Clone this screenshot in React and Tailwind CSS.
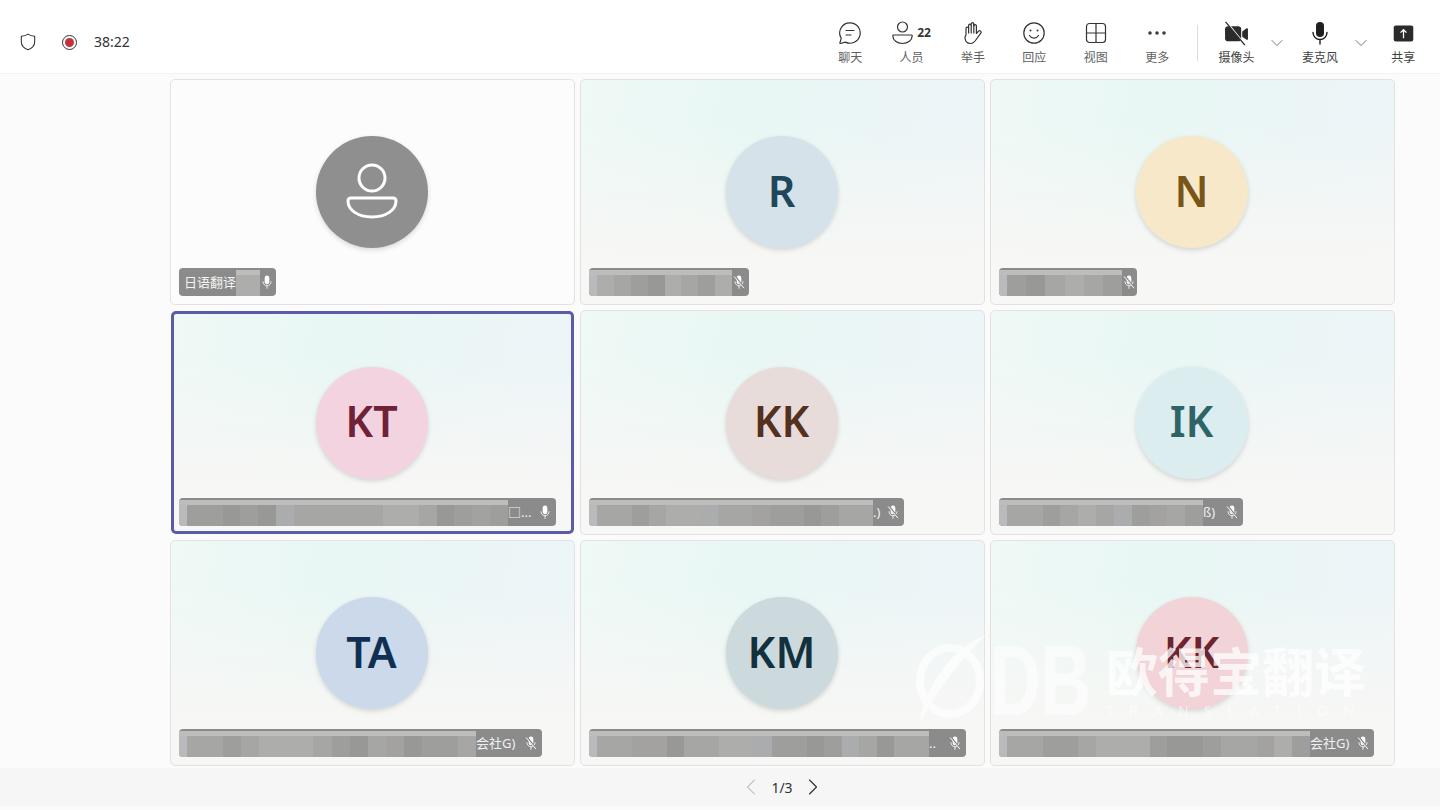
import { ChevronDown, ChevronLeft, ChevronRight, Ellipsis } from 'lucide-react'

const tones = ['bg-[#a6a6a4]', 'bg-[#9e9e9c]', 'bg-[#adadab]', 'bg-[#989897]', 'bg-[#a3a2a0]', 'bg-[#aaacae]']

const tiles = [
  { initials: null, label: '日语翻译', barWidth: 'w-[97px]', blur: 'w-[24px]', avatar: 'bg-[#8f8f8f]', ink: 'text-white', muted: false, plain: true, cells: '2' },
  { initials: 'R', barWidth: 'w-[160px]', blur: 'w-[143px]', avatar: 'bg-[#d6e2ea]', ink: 'text-[#1f475a]', muted: true, cells: '20132012' },
  { initials: 'N', barWidth: 'w-[138px]', blur: 'w-[123px]', avatar: 'bg-[#f6e8c9]', ink: 'text-[#7a5518]', muted: true, cells: '130201' },
  { initials: 'KT', barWidth: 'w-[377px]', blur: 'w-[329px]', avatar: 'bg-[#f4d3e0]', ink: 'text-[#6f2138]', muted: false, selected: true, tail: '□...', cells: '113135000002203141' },
  { initials: 'KK', barWidth: 'w-[315px]', blur: 'w-[284px]', avatar: 'bg-[#e8dcda]', ink: 'text-[#54301f]', muted: true, tail: '.)', cells: '0010225004113100' },
  { initials: 'IK', barWidth: 'w-[244px]', blur: 'w-[204px]', avatar: 'bg-[#dcedf0]', ink: 'text-[#2f6467]', muted: true, tail: 'ß)', cells: '00102051401' },
  { initials: 'TA', barWidth: 'w-[363px]', blur: 'w-[297px]', avatar: 'bg-[#cbd9ea]', ink: 'text-[#0f3052]', muted: true, tail: '会社G)', cells: '0010222013043110' },
  { initials: 'KM', barWidth: 'w-[377px]', blur: 'w-[340px]', avatar: 'bg-[#ccd9dd]', ink: 'text-[#12313c]', muted: true, tail: '..', cells: '0044300225113150300' },
  { initials: 'KK', barWidth: 'w-[375px]', blur: 'w-[311px]', avatar: 'bg-[#f2d3d8]', ink: 'text-[#6c2530]', muted: true, tail: '会社G)', cells: '00110222133100421' },
]

function ChatIcon() {
  return (
    <svg viewBox="0 0 24 24" className="h-6 w-6" fill="none" stroke="#333" strokeWidth="1.2">
      <path d="M12 1.8a10.2 10.2 0 1 1-4.6 19.3l-4.9 1.4c-.4.1-.7-.2-.6-.6l1.3-4.6A10.2 10.2 0 0 1 12 1.8Z" />
      <path d="M8 9.5h8M8 14h5" strokeLinecap="round" />
    </svg>
  )
}

function PeopleIcon() {
  return (
    <svg viewBox="0 0 22 24" className="h-6 w-[22px]" fill="none" stroke="#333" strokeWidth="1.2">
      <circle cx="10.5" cy="6" r="5" />
      <path d="M1.5 14h18c.4 0 .7.3.7.7 0 4.4-4.2 7.8-9.7 7.8S.8 19.1.8 14.7c0-.4.3-.7.7-.7Z" />
    </svg>
  )
}

function HandIcon() {
  return (
    <svg viewBox="3 0 19 25" className="h-[25px] w-[19px]" fill="none" stroke="#333" strokeWidth="1.2" strokeLinejoin="round">
      <path d="M6 14V7.5a1.3 1.3 0 0 1 2.6 0v-3a1.3 1.3 0 0 1 2.6 0V3a1.3 1.3 0 0 1 2.6 0v2a1.3 1.3 0 0 1 2.6 0v7.5l2.2-2.4a1.5 1.5 0 0 1 2.2 2l-4.6 6.4c-1.3 2-3 4-5.6 4-3.5 0-5.6-2.6-5.6-6.5Z" />
      <path d="M8.6 7.5V12M11.2 4.5V12M13.8 3V12" strokeLinecap="round" />
    </svg>
  )
}

function SmileIcon() {
  return (
    <svg viewBox="0 0 24 24" className="h-6 w-6" fill="none" stroke="#333" strokeWidth="1.2">
      <circle cx="12" cy="12" r="10.2" />
      <circle cx="8.5" cy="9.5" r="1" fill="#333" stroke="none" />
      <circle cx="15.5" cy="9.5" r="1" fill="#333" stroke="none" />
      <path d="M7.5 14.5c1 1.7 2.7 2.6 4.5 2.6s3.500-.9 4.500-2.600" strokeLinecap="round" />
    </svg>
  )
}

function ViewIcon() {
  return (
    <svg viewBox="0 0 24 24" className="h-6 w-6" fill="none" stroke="#333" strokeWidth="1.2">
      <rect x="2.5" y="2.5" width="19" height="19" rx="3" />
      <path d="M12 2.5v19M2.5 12h19" />
    </svg>
  )
}

function CameraOffIcon() {
  return (
    <svg viewBox="0 0 24 24" className="h-[25px] w-[25px]">
      <rect x="1" y="5" width="15.5" height="14.5" rx="3" fill="#2b2b2b" />
      <path d="M17.5 10l4.2-3c.6-.4 1.3 0 1.3.7v9.6c0 .7-.7 1.1-1.3.7l-4.2-3Z" fill="#2b2b2b" />
      <path d="M2.8 1.3l17 21" stroke="#fff" strokeWidth="1.5" />
      <path d="M1.5 0.8l18.5 22.4" stroke="#2b2b2b" strokeWidth="1.3" />
    </svg>
  )
}

function MicIcon({ size = 'h-6 w-6', color = '#1f1f1f', off = false }) {
  return (
    <svg viewBox="0 0 24 24" className={size} fill="none">
      <rect x="8" y="1" width="8" height="15" rx="4" fill={color} />
      <path d="M5 11.5a7 7 0 0 0 14 0M12 18.5V23" stroke={color} strokeWidth="1.4" strokeLinecap="round" />
      {off && <path d="M4.5 1.5l16 20" stroke="#8e8e8e" strokeWidth="3.5" />}
      {off && <path d="M3.5 2.5l17 20" stroke={color} strokeWidth="1.6" />}
    </svg>
  )
}

function ShareIcon() {
  return (
    <svg viewBox="0 0 24 20" className="h-[17px] w-[23px]">
      <rect x="0.5" y="0.5" width="23" height="19" rx="2.5" fill="#2b2b2b" />
      <path d="M12 15.5V5.5M8.5 9l3.5-3.5L15.5 9" stroke="#fff" strokeWidth="1.5" fill="none" />
    </svg>
  )
}

function ToolButton({ label, strong, children }) {
  return (
    <div className="flex w-[61.4px] flex-col items-center">
      <div className="flex h-[28px] items-center justify-center">{children}</div>
      <span className={`mt-[2px] text-[12px] leading-[18px] ${strong ? 'text-[#424242]' : 'text-[#616161]'}`}>{label}</span>
    </div>
  )
}

function Chevron() {
  return (
    <div className="flex h-[44px] w-[20px] items-center justify-center pt-[4px]">
      <ChevronDown size={24} strokeWidth={0.8} color="#333" />
    </div>
  )
}

function Header() {
  return (
    <header className="flex h-[74px] shrink-0 items-start justify-between border-b border-[#f3f3f3] bg-white pr-[6px] pl-[20px]">
      <div className="flex items-center pt-[33px] text-[#333]">
        <svg viewBox="0 0 18 20" className="h-[18px] w-4" fill="none" stroke="#333" strokeWidth="1.2">
          <path d="M9 1.2c2 1.5 4.5 2.3 7.5 2.4v6.4c0 4-2.5 6.8-7.5 8.8-5-2-7.5-4.800-7.500-8.800V3.600c3-.1 5.500-.9 7.500-2.400Z" />
        </svg>
        <span className="ml-[26px] flex h-[15px] w-[15px] items-center justify-center rounded-full border border-[#333]">
          <span className="h-[9px] w-[9px] rounded-full bg-[#c4313b]" />
        </span>
        <span className="ml-[17px] text-[14px] leading-[18px]">38:22</span>
      </div>
      <div className="flex items-start pt-[19px]">
        <ToolButton label="聊天"><ChatIcon /></ToolButton>
        <ToolButton label="人员">
          <div className="flex items-center gap-[3px]">
            <PeopleIcon />
            <span className="text-[12px] font-bold text-[#333]">22</span>
          </div>
        </ToolButton>
        <ToolButton label="举手"><HandIcon /></ToolButton>
        <ToolButton label="回应"><SmileIcon /></ToolButton>
        <ToolButton label="视图"><ViewIcon /></ToolButton>
        <ToolButton label="更多"><Ellipsis size={24} strokeWidth={1.5} color="#333" /></ToolButton>
        <div className="mt-[6px] ml-[9px] h-[36px] w-px bg-[#dcdcdc]" />
        <div className="ml-[8px]"><ToolButton label="摄像头" strong><CameraOffIcon /></ToolButton></div>
        <Chevron />
        <div className="ml-[2px]"><ToolButton label="麦克风" strong><MicIcon /></ToolButton></div>
        <Chevron />
        <div className="ml-[2px]"><ToolButton label="共享" strong><ShareIcon /></ToolButton></div>
      </div>
    </header>
  )
}

function Mosaic({ width, cells, plain }) {
  return (
    <div className={`flex h-full shrink-0 flex-col pt-[2px] ${width}`}>
      <div className="h-[5px] shrink-0 bg-[#bdbdbb]" />
      <div className="flex min-h-0 flex-1 blur-[0.6px]">
        {!plain && <div className="w-[8px] shrink-0 bg-[#bababc]" />}
        {cells.split('').map((c, i) => (
          <div key={i} className={`flex-1 ${tones[Number(c)]}`} />
        ))}
      </div>
    </div>
  )
}

function NameBar({ tile }) {
  const place = tile.selected ? 'bottom-[5px] left-[5px]' : 'bottom-[8px] left-[8px]'
  return (
    <div className={`absolute flex h-[28px] items-center overflow-hidden rounded-[4px] bg-[#8b8b8b] text-[13px] text-white ${place} ${tile.barWidth}`}>
      {tile.label && <span className="mt-[1px] shrink-0 pl-[5px] whitespace-nowrap text-[#f4f4f4]">{tile.label}</span>}
      <Mosaic width={tile.blur} cells={tile.cells} plain={tile.plain} />
      {tile.tail && <span className="mt-[1px] whitespace-nowrap text-[#f0f0f0]">{tile.tail}</span>}
      <div className="mr-[4px] ml-auto">
        <MicIcon size="h-[14px] w-[14px]" color="#ffffff" off={tile.muted} />
      </div>
    </div>
  )
}

function Tile({ tile, index }) {
  const bg = index === 0
    ? 'bg-[#fcfcfc]'
    : 'bg-[linear-gradient(180deg,rgba(247,247,245,0)_20%,#f7f7f5_80%),linear-gradient(100deg,#eff9f6_0%,#e8f7f4_40%,#ebf5f6_70%,#edf5f8_100%)]'
  const frame = tile.selected
    ? 'm-px border-[3px] border-[#5a5ca8]'
    : 'border border-[#e2e2e0]'
  return (
    <div className={`relative flex items-center justify-center rounded-[5px] pr-[2px] ${bg} ${frame}`}>
      <div className={`flex h-[112px] w-[112px] items-center justify-center rounded-full shadow-[0_2px_5px_rgba(0,0,0,0.14)] ${tile.avatar}`}>
        {tile.initials ? (
          <span className={`-mt-[2px] text-[43px] font-[560] ${tile.ink}`}>{tile.initials}</span>
        ) : (
          <svg viewBox="0 0 56 60" className="h-[60px] w-[56px]" fill="none" stroke="#fff" strokeWidth="3">
            <circle cx="28" cy="16" r="13" />
            <path d="M7 36h42c2 0 3 1 3 3 0 9-10 16-24 16S4 48 4 39c0-2 1-3 3-3Z" />
          </svg>
        )}
      </div>
      <NameBar tile={tile} />
    </div>
  )
}

// watermark lies over the tiles
function Watermark() {
  return (
    <div className="pointer-events-none absolute top-[632px] left-[915px] flex items-start text-white">
      <svg viewBox="0 0 75 96" className="h-[96px] w-[75px] opacity-70" fill="#fff" stroke="none">
        <ellipse cx="35" cy="49" rx="30" ry="33" fill="none" stroke="#fff" strokeWidth="8" />
        <path d="M5 92C8 60 34 16 71 3 47 26 20 60 5 92Z" />
      </svg>
      <span className="inline-block w-[104px] origin-left scale-x-[0.7] text-[100px] leading-[96px] font-bold whitespace-nowrap text-white opacity-60 [font-family:'Liberation_Sans',sans-serif]">DB</span>
      <div className="ml-[12px] pt-[14px]">
        <div className="text-[52px] leading-[52px] font-bold opacity-75">欧得宝翻译</div>
        <div className="mt-[5px] text-[14px] leading-[16px] tracking-[15.5px] whitespace-nowrap opacity-55">TRANSLATION</div>
      </div>
    </div>
  )
}

export default function App() {
  return (
    <div className="relative flex h-[810px] w-[1440px] flex-col overflow-hidden bg-[#fbfbfb] [font-family:'Noto_Sans','Noto_Sans_CJK_SC',sans-serif]">
      <Header />
      <main className="flex-1 pt-[5px] pl-[170px]">
        <div className="grid w-[1225px] grid-cols-3 grid-rows-[226px_225px_226px] gap-[5px]">
          {tiles.map((tile, i) => (
            <Tile key={i} tile={tile} index={i} />
          ))}
        </div>
      </main>
      <footer className="mb-[4px] flex h-[38px] shrink-0 items-center justify-center gap-[6px] bg-[#f6f6f6] pl-[124px] text-[14px] text-[#333]">
        <ChevronLeft size={28} strokeWidth={0.8} color="#9a9a9a" />
        <span>1/3</span>
        <ChevronRight size={28} strokeWidth={1} color="#333" />
      </footer>
      <Watermark />
    </div>
  )
}
